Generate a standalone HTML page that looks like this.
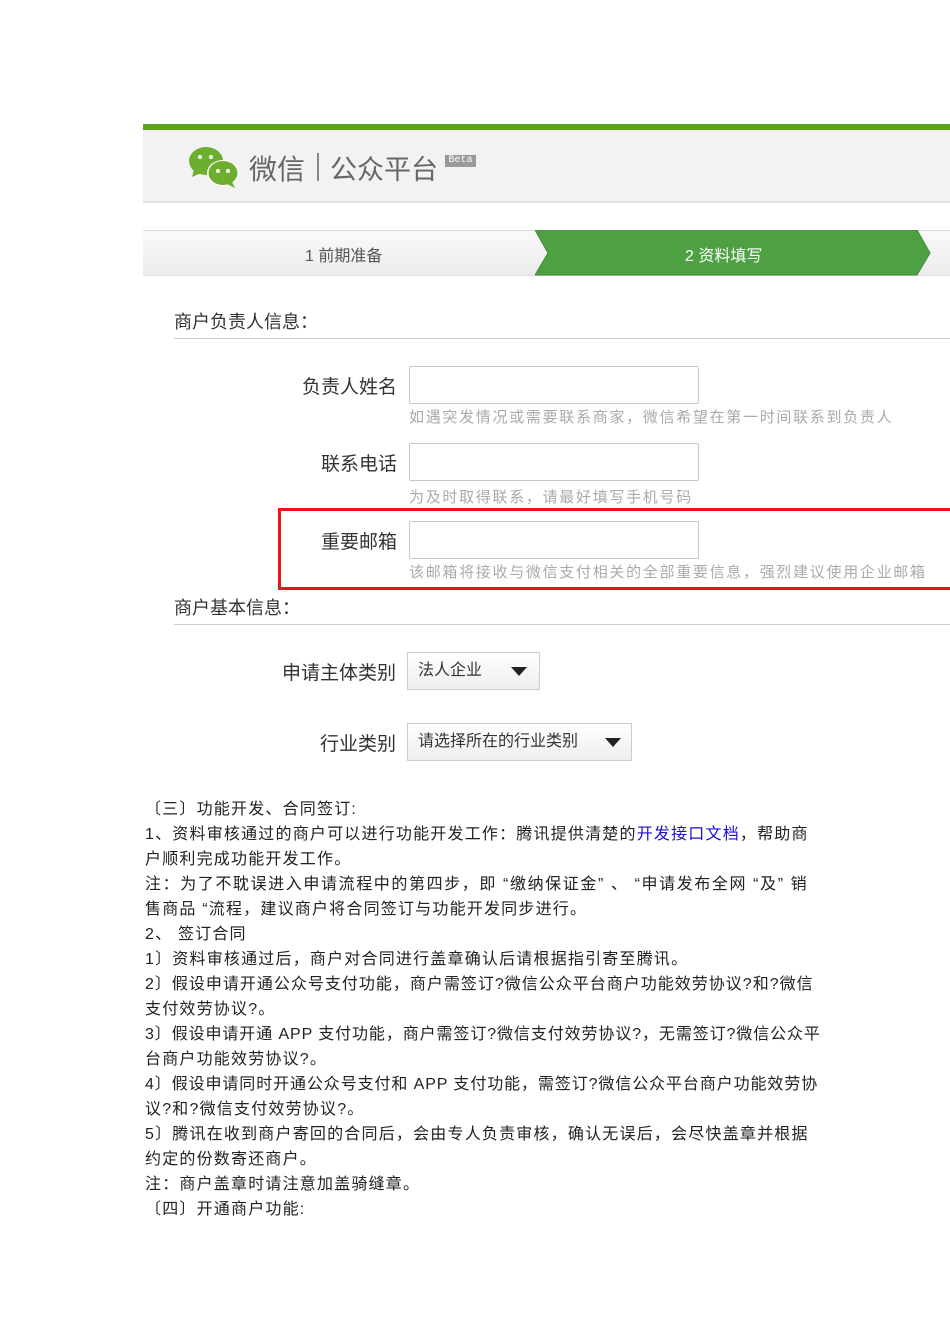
<!DOCTYPE html>
<html><head><meta charset="utf-8"><style>
body{margin:0;width:950px;height:1344px;background:#fff;position:relative;overflow:hidden;font-family:"Liberation Sans","Noto Sans CJK SC",sans-serif;}
.a{position:absolute;white-space:nowrap;}
.inp{position:absolute;border:1px solid #c8c8c8;border-radius:2px;background:#fff;width:288px;height:36px;}
.lbl{position:absolute;font-size:19px;color:#333;text-align:right;width:200px;top:0}
.hint{position:absolute;font-size:15px;color:#aaa;white-space:nowrap;letter-spacing:1.7px}
.sel{position:absolute;border:1px solid #ccc;background:linear-gradient(#fff,#eee);height:36px;font-size:16px;color:#333;line-height:36px;padding-left:10px;box-sizing:border-box;}
.tri{position:absolute;top:14px;width:0;height:0;border-left:8px solid transparent;border-right:8px solid transparent;border-top:9px solid #222;}
.t{position:absolute;left:145px;font-size:16px;color:#222;white-space:nowrap;line-height:25px;letter-spacing:1.2px}
</style></head><body>
<div class="a" style="left:143px;top:124px;width:807px;height:6px;background:#5ea319"></div>
<div class="a" style="left:143px;top:130px;width:807px;height:71px;background:#f2f2f2;border-bottom:2px solid #e2e2e2"></div>
<svg class="a" style="left:188px;top:145px" width="54" height="45" viewBox="0 0 54 45">
<ellipse cx="18" cy="16" rx="17" ry="14" fill="#6cae2d"/><path d="M6 25 L4 32 L13 28Z" fill="#6cae2d"/>
<ellipse cx="35" cy="28" rx="16" ry="13" fill="#fff"/>
<ellipse cx="35" cy="28" rx="14.5" ry="12" fill="#6cae2d"/><path d="M44 37 L47 43 L39 39Z" fill="#6cae2d"/>
<circle cx="12" cy="12" r="2" fill="#fff"/><circle cx="23" cy="12" r="2" fill="#fff"/>
<circle cx="30" cy="26" r="2" fill="#fff"/><circle cx="40" cy="26" r="2" fill="#fff"/></svg>
<div class="a" style="left:249px;top:148px;font-size:28px;color:#666">微信</div>
<div class="a" style="left:317px;top:153px;width:2px;height:28px;background:#888"></div>
<div class="a" style="left:330px;top:148px;font-size:27px;color:#666">公众平台</div>
<div class="a" style="left:445px;top:155px;width:31px;height:12px;background:#999;color:#fff;font-size:10px;line-height:12px;text-align:center;font-family:'Liberation Mono',monospace">Beta</div>
<div class="a" style="left:143px;top:230px;width:807px;height:44px;background:linear-gradient(#fafafa,#ececec);border-top:1px solid #ddd;border-bottom:1px solid #ddd"></div>
<svg class="a" style="left:535px;top:230px" width="415" height="46"><polygon points="0,0 382,0 395,23 382,45 0,45 13,23" fill="#4ea142" stroke="#3d8a33"/></svg>
<div class="a" style="left:305px;top:242px;font-size:16px;color:#555">1 前期准备</div>
<div class="a" style="left:685px;top:242px;font-size:16px;color:#fff">2 资料填写</div>
<div class="a" style="left:174px;top:308px;font-size:18px;color:#333">商户负责人信息：</div>
<div class="a" style="left:174px;top:338px;width:776px;height:1px;background:#ccc"></div>
<div class="lbl" style="left:197px;top:372px">负责人姓名</div>
<div class="inp" style="left:409px;top:366px"></div>
<div class="hint" style="left:409px;top:406px">如遇突发情况或需要联系商家，微信希望在第一时间联系到负责人</div>
<div class="lbl" style="left:197px;top:449px">联系电话</div>
<div class="inp" style="left:409px;top:443px"></div>
<div class="hint" style="left:409px;top:486px">为及时取得联系，请最好填写手机号码</div>
<div class="a" style="left:278px;top:508px;width:680px;height:82px;border:3px solid #e8141b;box-sizing:border-box"></div>
<div class="lbl" style="left:197px;top:527px">重要邮箱</div>
<div class="inp" style="left:409px;top:521px"></div>
<div class="hint" style="left:409px;top:561px">该邮箱将接收与微信支付相关的全部重要信息，强烈建议使用企业邮箱</div>
<div class="a" style="left:174px;top:594px;font-size:18px;color:#333">商户基本信息：</div>
<div class="a" style="left:174px;top:624px;width:776px;height:1px;background:#ccc"></div>
<div class="lbl" style="left:196px;top:658px">申请主体类别</div>
<div class="sel" style="left:407px;top:652px;width:133px;height:38px">法人企业<div class="tri" style="left:103px"></div></div>
<div class="lbl" style="left:196px;top:729px">行业类别</div>
<div class="sel" style="left:407px;top:723px;width:225px;height:38px">请选择所在的行业类别<div class="tri" style="left:197px"></div></div>
<div class="t" style="top:797px">〔三〕功能开发、合同签订:</div>
<div class="t" style="top:822px">1、资料审核通过的商户可以进行功能开发工作：腾讯提供清楚的<span style="color:#1a0dcc">开发接口文档</span>，帮助商</div>
<div class="t" style="top:847px">户顺利完成功能开发工作。</div>
<div class="t" style="top:872px;letter-spacing:1.6px">注：为了不耽误进入申请流程中的第四步，即 “缴纳保证金” 、 “申请发布全网 “及” 销</div>
<div class="t" style="top:897px">售商品 “流程，建议商户将合同签订与功能开发同步进行。</div>
<div class="t" style="top:922px">2、 签订合同</div>
<div class="t" style="top:947px">1〕资料审核通过后，商户对合同进行盖章确认后请根据指引寄至腾讯。</div>
<div class="t" style="top:972px;letter-spacing:1.0px">2〕假设申请开通公众号支付功能，商户需签订?微信公众平台商户功能效劳协议?和?微信</div>
<div class="t" style="top:997px">支付效劳协议?。</div>
<div class="t" style="top:1022px;letter-spacing:0.9px">3〕假设申请开通 APP 支付功能，商户需签订?微信支付效劳协议?，无需签订?微信公众平</div>
<div class="t" style="top:1047px">台商户功能效劳协议?。</div>
<div class="t" style="top:1072px;letter-spacing:0.9px">4〕假设申请同时开通公众号支付和 APP 支付功能，需签订?微信公众平台商户功能效劳协</div>
<div class="t" style="top:1097px">议?和?微信支付效劳协议?。</div>
<div class="t" style="top:1122px">5〕腾讯在收到商户寄回的合同后，会由专人负责审核，确认无误后，会尽快盖章并根据</div>
<div class="t" style="top:1147px">约定的份数寄还商户。</div>
<div class="t" style="top:1172px">注：商户盖章时请注意加盖骑缝章。</div>
<div class="t" style="top:1197px">〔四〕开通商户功能:</div>
</body></html>
